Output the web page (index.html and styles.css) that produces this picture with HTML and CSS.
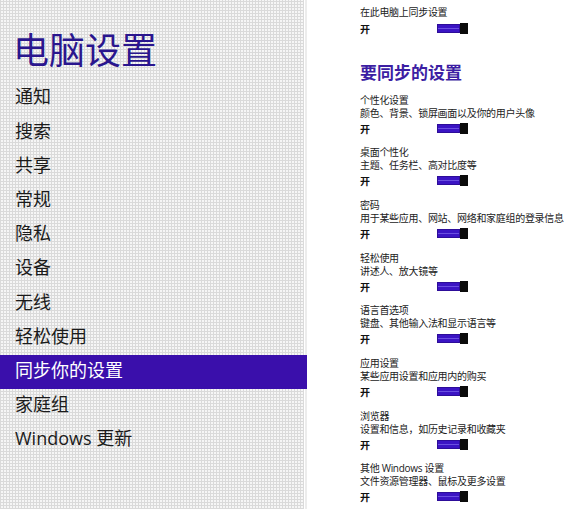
FILE: index.html
```html
<!DOCTYPE html>
<html lang="zh-CN">
<head>
<meta charset="utf-8">
<title>电脑设置</title>
<link rel="stylesheet" href="styles.css">
</head>
<body>
<div class="page">
  <nav class="sidebar">
    <h1 class="title">电脑设置</h1>
    <ul class="nav">
      <li class="nav-item">通知</li>
      <li class="nav-item">搜索</li>
      <li class="nav-item">共享</li>
      <li class="nav-item">常规</li>
      <li class="nav-item">隐私</li>
      <li class="nav-item">设备</li>
      <li class="nav-item">无线</li>
      <li class="nav-item">轻松使用</li>
      <li class="nav-item active">同步你的设置</li>
      <li class="nav-item">家庭组</li>
      <li class="nav-item">Windows 更新</li>
    </ul>
  </nav>
  <main class="content">
    <section class="top">
      <div class="line">在此电脑上同步设置</div>
      <div class="row"><span class="state">开</span><span class="toggle"><span class="track"></span><span class="thumb"></span></span></div>
    </section>
    <h2 class="heading">要同步的设置</h2>
    <div class="groups">
      <section class="group">
        <div class="line">个性化设置</div>
        <div class="line">颜色、背景、锁屏画面以及你的用户头像</div>
        <div class="row"><span class="state">开</span><span class="toggle"><span class="track"></span><span class="thumb"></span></span></div>
      </section>
      <section class="group">
        <div class="line">桌面个性化</div>
        <div class="line">主题、任务栏、高对比度等</div>
        <div class="row"><span class="state">开</span><span class="toggle"><span class="track"></span><span class="thumb"></span></span></div>
      </section>
      <section class="group">
        <div class="line">密码</div>
        <div class="line">用于某些应用、网站、网络和家庭组的登录信息</div>
        <div class="row"><span class="state">开</span><span class="toggle"><span class="track"></span><span class="thumb"></span></span></div>
      </section>
      <section class="group">
        <div class="line">轻松使用</div>
        <div class="line">讲述人、放大镜等</div>
        <div class="row"><span class="state">开</span><span class="toggle"><span class="track"></span><span class="thumb"></span></span></div>
      </section>
      <section class="group">
        <div class="line">语言首选项</div>
        <div class="line">键盘、其他输入法和显示语言等</div>
        <div class="row"><span class="state">开</span><span class="toggle"><span class="track"></span><span class="thumb"></span></span></div>
      </section>
      <section class="group">
        <div class="line">应用设置</div>
        <div class="line">某些应用设置和应用内的购买</div>
        <div class="row"><span class="state">开</span><span class="toggle"><span class="track"></span><span class="thumb"></span></span></div>
      </section>
      <section class="group">
        <div class="line">浏览器</div>
        <div class="line">设置和信息，如历史记录和收藏夹</div>
        <div class="row"><span class="state">开</span><span class="toggle"><span class="track"></span><span class="thumb"></span></span></div>
      </section>
      <section class="group">
        <div class="line">其他 Windows 设置</div>
        <div class="line">文件资源管理器、鼠标及更多设置</div>
        <div class="row"><span class="state">开</span><span class="toggle"><span class="track"></span><span class="thumb"></span></span></div>
      </section>
    </div>
  </main>
</div>
</body>
</html>
```

FILE: styles.css
```css
* { box-sizing: border-box; }
html, body {
  margin: 0;
  padding: 0;
  background: #ffffff;
  width: 576px;
  height: 509px;
  overflow: hidden;
  font-family: "Open Sans", "Noto Sans CJK SC", sans-serif;
}
.page {
  display: flex;
  height: 509px;
}
.sidebar {
  width: 307px;
  flex: none;
  padding-top: 26px;
  background-color: #f6f6f6;
  background-image:
    linear-gradient(90deg, transparent 0 304px, #ffffff 304px 305px, #ececec 305px),
    repeating-linear-gradient(90deg, #dadada 0 1px, transparent 1px 3px),
    repeating-linear-gradient(0deg, #dadada 0 1px, transparent 1px 3px);
}
.title {
  margin: 0 0 11.4px 0;
  padding-left: 13px;
  font-size: 36px;
  line-height: 44px;
  font-weight: 400;
  color: #2a168e;
  font-family: "Noto Sans CJK SC", sans-serif;
}
.nav {
  list-style: none;
  margin: 0;
  padding: 0;
}
.nav-item {
  height: 34.2px;
  line-height: 30px;
  padding-left: 15px;
  font-size: 18px;
  color: #1b1b1b;
}
.nav-item.active {
  background: #3a0fab;
  color: #ffffff;
}
.content {
  flex: 1;
  padding-left: 53px;
  padding-top: 6px;
}
.line {
  font-size: 10px;
  line-height: 13px;
  height: 13px;
  letter-spacing: -0.3px;
  color: #222222;
  white-space: nowrap;
}
.row {
  display: flex;
  align-items: center;
  height: 15px;
  margin-top: 1px;
}
.top .row { margin-top: 2px; }
.state {
  width: 77px;
  font-size: 10px;
  font-weight: 700;
  color: #111111;
}
.toggle {
  display: flex;
  align-items: center;
}
.track {
  width: 23px;
  height: 9px;
  border: 1px solid #2d0d99;
  background: linear-gradient(#3b14c4 0 3px, #6a4fe0 3px 4px, #3b14c4 4px);
}
.thumb {
  width: 8px;
  height: 11px;
  background: #0b0b0b;
}
.heading {
  margin: 25px 0 10.5px 0;
  font-size: 17px;
  line-height: 22px;
  font-weight: 600;
  color: #3c1ea3;
  font-family: "Noto Sans CJK SC", sans-serif;
}
.groups {
  display: flex;
  flex-direction: column;
  gap: 10.7px;
}
```
